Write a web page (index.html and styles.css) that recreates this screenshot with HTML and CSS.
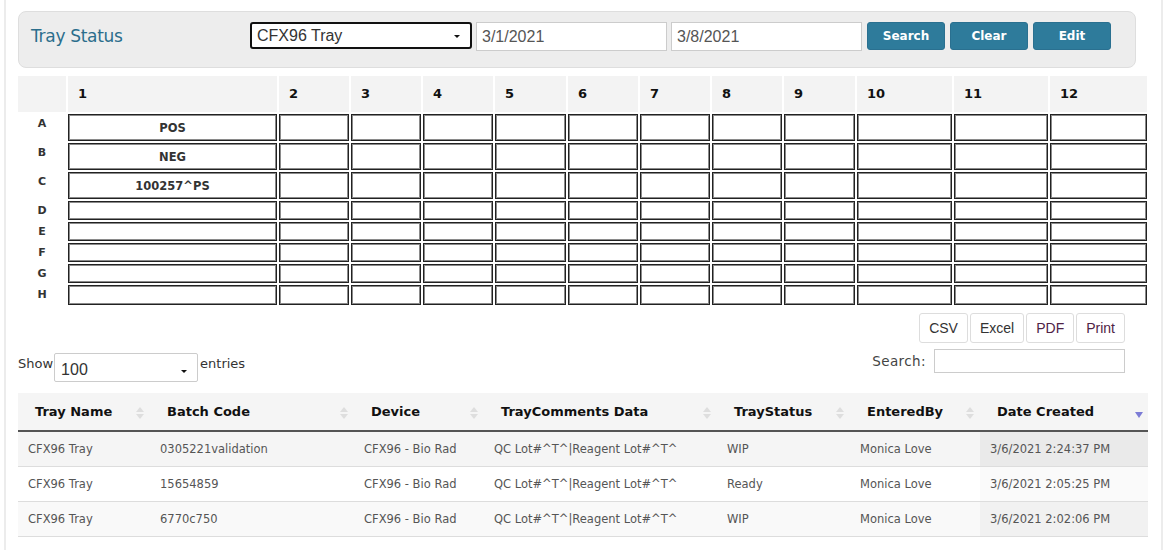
FILE: index.html
```html
<!DOCTYPE html>
<html lang="en">
<head>
    <meta charset="UTF-8">
    <title>Tray Status</title>
    <link rel="stylesheet" href="styles.css">
</head>
<body>
<div class="page">

    <!-- filter bar -->
    <div class="panel">
        <h2 class="title">Tray Status</h2>
        <div class="select tray-select">CFX96 Tray</div>
        <input type="text" class="date" value="3/1/2021">
        <input type="text" class="date" value="3/8/2021">
        <button class="btn">Search</button>
        <button class="btn">Clear</button>
        <button class="btn">Edit</button>
    </div>

    <!-- tray grid -->
    <div class="tray" id="tray"></div>

    <!-- table toolbar -->
    <div class="toolbar">
        <div class="length">
            <span>Show</span>
            <div class="select length-select">100</div>
            <span>entries</span>
        </div>
        <div class="right-tools">
            <div class="exports">
                <button class="exp">CSV</button>
                <button class="exp">Excel</button>
                <button class="exp visited">PDF</button>
                <button class="exp visited">Print</button>
            </div>
            <div class="filter">
                <label for="q">Search:</label>
                <input type="text" id="q">
            </div>
        </div>
    </div>

    <table class="data">
        <colgroup>
            <col style="width:132px">
            <col style="width:204px">
            <col style="width:130px">
            <col style="width:233px">
            <col style="width:133px">
            <col style="width:130px">
            <col style="width:168px">
        </colgroup>
        <thead>
            <tr>
                <th class="sort">Tray Name</th>
                <th class="sort">Batch Code</th>
                <th class="sort">Device</th>
                <th class="sort">TrayComments Data</th>
                <th class="sort">TrayStatus</th>
                <th class="sort">EnteredBy</th>
                <th class="sort-desc">Date Created</th>
            </tr>
        </thead>
        <tbody>
            <tr class="odd hover">
                <td>CFX96 Tray</td><td>0305221validation</td><td>CFX96 - Bio Rad</td>
                <td>QC Lot#^T^|Reagent Lot#^T^</td><td>WIP</td><td>Monica Love</td>
                <td class="sorted">3/6/2021 2:24:37 PM</td>
            </tr>
            <tr class="even">
                <td>CFX96 Tray</td><td>15654859</td><td>CFX96 - Bio Rad</td>
                <td>QC Lot#^T^|Reagent Lot#^T^</td><td>Ready</td><td>Monica Love</td>
                <td class="sorted">3/6/2021 2:05:25 PM</td>
            </tr>
            <tr class="odd">
                <td>CFX96 Tray</td><td>6770c750</td><td>CFX96 - Bio Rad</td>
                <td>QC Lot#^T^|Reagent Lot#^T^</td><td>WIP</td><td>Monica Love</td>
                <td class="sorted">3/6/2021 2:02:06 PM</td>
            </tr>
        </tbody>
    </table>
</div>

<script>
    // build the 8 x 12 tray grid
    var rows = ["A", "B", "C", "D", "E", "F", "G", "H"];
    var wells = { "A1": "POS", "B1": "NEG", "C1": "100257^PS" };
    var tray = document.getElementById("tray");

    var corner = document.createElement("div");
    corner.className = "head";
    tray.appendChild(corner);
    for (var c = 1; c <= 12; c++) {
        var h = document.createElement("div");
        h.className = "head";
        h.innerText = c;
        tray.appendChild(h);
    }

    for (var r = 0; r < rows.length; r++) {
        var lab = document.createElement("div");
        lab.className = "label";
        lab.innerText = rows[r];
        tray.appendChild(lab);
        for (var c = 1; c <= 12; c++) {
            var w = document.createElement("div");
            w.className = "well";
            w.innerText = wells[rows[r] + c] || "";
            tray.appendChild(w);
        }
    }
</script>
</body>
</html>
```

FILE: styles.css
```css
body {
    margin: 0;
    background: #fff;
    font-family: "DejaVu Sans", Verdana, sans-serif;
    color: #333;
}
.page {
    margin-left: 4px;
    width: 1130px;
    border-left: 2px solid #ececec;
    border-right: 2px solid #ececec;
    padding: 11px 13px 12px 12px;
    min-height: 527px;
}
.panel {
    display: flex;
    align-items: center;
    height: 49px;
    margin-right: 12px;
    padding: 0 12px 6px 12px;
    background: #ededed;
    border: 1px solid #dedede;
    border-radius: 8px;
}
.title {
    width: 219px;
    margin: 0 0 1px 0;
    font-size: 17px;
    font-weight: normal;
    color: #2b6e8c;
    letter-spacing: -0.3px;
}
.select {
    position: relative;
    box-sizing: border-box;
    font-family: "Liberation Sans", Arial, sans-serif;
    font-size: 16px;
    color: #333;
    background: #fff;
}
.select::after {
    content: "";
    position: absolute;
    right: 10px;
    top: 50%;
    margin-top: -1px;
    border-left: 3px solid transparent;
    border-right: 3px solid transparent;
    border-top: 3px solid #111;
}
.tray-select {
    width: 222px;
    height: 27px;
    line-height: 23px;
    padding-left: 5px;
    border: 2px solid #111;
    border-radius: 3px;
    margin-bottom: 2px;
}
.date {
    box-sizing: border-box;
    width: 191px;
    height: 29px;
    margin-left: 4px;
    padding: 0 5px;
    border: 1px solid #ccc;
    font-family: "Liberation Sans", Arial, sans-serif;
    font-size: 16px;
    color: #555;
}
.btn {
    width: 78px;
    height: 28px;
    margin-left: 5px;
    margin-bottom: 2px;
    background: #2e7b9b;
    color: #fff;
    border: 1px solid #2a7090;
    border-radius: 3px;
    font-family: "DejaVu Sans", Verdana, sans-serif;
    font-weight: bold;
    font-size: 12px;
    cursor: pointer;
}

/* tray grid */
.tray {
    display: grid;
    grid-template-columns: 48px 209px 70px 70px 70px 71px 70px 70px 70px 71px 95px 94px 97px;
    grid-template-rows: 36px 27px 27px 27px 19px 19px 19px 19px 20px;
    gap: 2px;
    margin-top: 8px;
}
.head {
    background: #f3f3f3;
    font-weight: bold;
    font-size: 13px;
    color: #111;
    padding-left: 10px;
    line-height: 36px;
}
.label {
    text-align: center;
    font-weight: bold;
    font-size: 11px;
    color: #333;
    padding-top: 3px;
}
.well {
    box-sizing: border-box;
    border: 1px solid #222;
    box-shadow: inset 0 0 0 1px #8a8a8a;
    text-align: center;
    font-weight: bold;
    font-size: 11.5px;
    line-height: 26px;
    color: #333;
}

/* toolbar */
.toolbar {
    display: flex;
    justify-content: space-between;
    align-items: flex-start;
    margin-top: 8px;
    padding-right: 23px;
}
.length {
    display: flex;
    align-items: flex-start;
    margin-top: 40px;
    font-size: 13px;
    color: #333;
}
.length span {
    padding-top: 3px;
}
.length-select {
    width: 144px;
    height: 29px;
    line-height: 32px;
    padding-left: 6px;
    margin: 0 2px 0 1px;
    border: 1px solid #ccc;
    border-radius: 2px;
}
.length-select::after {
    margin-top: 2px;
}
.right-tools {
    display: flex;
    flex-direction: column;
    align-items: flex-end;
}
.exports {
    display: flex;
    gap: 2px;
}
.exp {
    height: 30px;
    padding: 0 9px;
    background: #fff;
    border: 1px solid #ddd;
    border-radius: 3px;
    font-family: "Liberation Sans", Arial, sans-serif;
    font-size: 14px;
    color: #333;
}
.exp.visited {
    color: #4f2346;
}
.filter {
    display: flex;
    align-items: center;
    margin-top: 6px;
    font-size: 13.5px;
    color: #444;
    letter-spacing: 0.4px;
}
.filter input {
    box-sizing: border-box;
    width: 191px;
    height: 24px;
    margin-left: 8px;
    border: 1px solid #ccc;
}

/* data table */
.data {
    width: 1130px;
    margin-top: 11px;
    border-collapse: collapse;
    table-layout: fixed;
}
.data th {
    position: relative;
    height: 37px;
    padding: 0 0 0 17px;
    background: #f5f5f5;
    border-bottom: 2px solid #555;
    text-align: left;
    font-size: 13px;
    color: #111;
}
.data th.sort::before,
.data th.sort::after,
.data th.sort-desc::after {
    content: "";
    position: absolute;
    right: 6px;
    border-left: 4px solid transparent;
    border-right: 4px solid transparent;
}
.data th.sort::before {
    top: 14px;
    border-bottom: 5px solid #dedede;
}
.data th.sort::after {
    top: 21px;
    border-top: 5px solid #dedede;
}
.data th.sort-desc::after {
    top: 19px;
    right: 5px;
    border-top: 6px solid #7c7cd6;
}
.data td {
    height: 34px;
    padding: 0 10px;
    border-bottom: 1px solid #ddd;
    font-size: 11.5px;
    color: #555;
    white-space: nowrap;
}
.data tr.odd td {
    background: #f9f9f9;
}
.data tr.hover td {
    background: #f5f5f5;
}
.data tr.odd td.sorted {
    background: #f1f1f1;
}
.data tr.even td.sorted {
    background: #fafafa;
}
.data tr.hover td.sorted {
    background: #eaeaea;
}
```
